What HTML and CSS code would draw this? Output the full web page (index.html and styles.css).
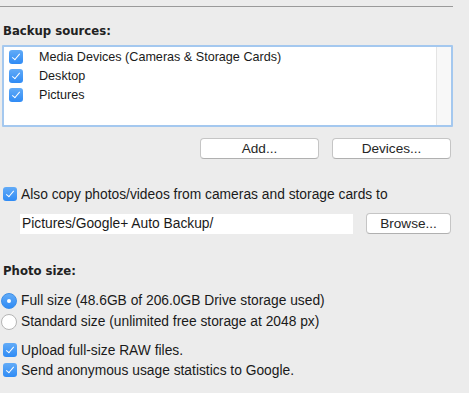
FILE: index.html
```html
<!DOCTYPE html>
<html lang="en">
<head>
    <meta charset="UTF-8">
    <title>Backup settings</title>
    <link rel="stylesheet" href="styles.css">
</head>
<body>

    <div class="panel">
        <hr class="rule">

        <h3 class="section-title">Backup sources:</h3>
        <div class="source-list">
            <ul class="sources">
                <li><span class="check on"></span><span class="label">Media Devices (Cameras &amp; Storage Cards)</span></li>
                <li><span class="check on"></span><span class="label">Desktop</span></li>
                <li><span class="check on"></span><span class="label">Pictures</span></li>
            </ul>
            <div class="scroll-track"></div>
        </div>

        <div class="button-row">
            <button class="btn wide">Add...</button>
            <button class="btn wide">Devices...</button>
        </div>

        <div class="option copy-option">
            <span class="check on"></span>
            <span>Also copy photos/videos from cameras and storage cards to</span>
        </div>

        <div class="path-row">
            <div class="path-field">Pictures/Google+ Auto Backup/</div>
            <button class="btn browse">Browse...</button>
        </div>

        <h3 class="section-title photo-title">Photo size:</h3>
        <div class="option size"><span class="radio on"></span><span>Full size (48.6GB of 206.0GB Drive storage used)</span></div>
        <div class="option size"><span class="radio"></span><span>Standard size (unlimited free storage at 2048 px)</span></div>

        <div class="extras">
            <div class="option"><span class="check on"></span><span>Upload full-size RAW files.</span></div>
            <div class="option"><span class="check on"></span><span>Send anonymous usage statistics to Google.</span></div>
        </div>
    </div>

</body>
</html>
```

FILE: styles.css
```css
body {
    margin: 0;
    background: #ececec;
    font-family: "Liberation Sans", Arial, sans-serif;
    font-size: 13.8px;
    color: #1a1a1a;
}

.panel {
    width: 453px;
    padding-top: 6px;
}

.rule {
    margin: 0;
    border: none;
    border-top: 1px solid #9a9a9a;
    height: 0;
}

.section-title {
    margin: 0;
    padding: 17px 0 0 3px;
    height: 21px;
    font-family: "DejaVu Sans", sans-serif;
    font-size: 11.7px;
    font-weight: bold;
    color: #222;
}

.source-list {
    margin-left: 2px;
    height: 78px;
    display: flex;
    background: white;
    border: 2px solid #a4c8ef;
    border-radius: 1px;
}

.sources {
    flex: 1;
    list-style: none;
    margin: 0;
    padding: 0;
    font-size: 12.6px;
}

.sources li {
    display: flex;
    align-items: center;
    height: 19px;
}

.sources .check {
    margin-left: 5px;
}

.sources .label {
    margin-left: 12px;
}

.scroll-track {
    width: 14px;
    background: #f8f8f8;
    border-left: 1px solid #e4e4e4;
}

/* checkbox + radio */
.check {
    width: 14px;
    height: 14px;
    border-radius: 3px;
    background: linear-gradient(#62abf7, #2f8bf5);
    flex-shrink: 0;
    position: relative;
    margin-right: 4px;
}

.check.on::after {
    content: "";
    position: absolute;
    left: 4.5px;
    top: 2px;
    width: 3px;
    height: 7px;
    border: solid white;
    border-width: 0 1.5px 1.5px 0;
    transform: rotate(40deg);
}

.radio {
    width: 16px;
    height: 16px;
    border-radius: 50%;
    border: 1px solid #b5b5b5;
    background: white;
    box-sizing: border-box;
    flex-shrink: 0;
    position: relative;
    margin-right: 4px;
}

.radio.on {
    background: linear-gradient(#62abf7, #2f8bf5);
    border-color: #3b8ee8;
}

.radio.on::after {
    content: "";
    position: absolute;
    left: 5px;
    top: 5px;
    width: 4px;
    height: 4px;
    border-radius: 50%;
    background: white;
}

.button-row {
    display: flex;
    justify-content: flex-end;
    gap: 13px;
    margin-top: 11px;
    padding-right: 2px;
}

.btn {
    font-family: "Liberation Sans", Arial, sans-serif;
    font-size: 13.6px;
    color: #262626;
    background: white;
    border: 1px solid #c5c5c5;
    border-bottom-color: #b0b0b0;
    border-radius: 4px;
    height: 21px;
    padding: 0;
}

.btn.wide {
    width: 119px;
}

.option {
    display: flex;
    align-items: center;
    height: 20px;
    padding-left: 3px;
}

.option.size {
    height: 21px;
    padding-left: 1px;
}

.copy-option {
    margin-top: 25px;
}

.path-row {
    display: flex;
    align-items: center;
    margin: 9px 2px 0 20px;
}

.path-field {
    width: 331px;
    height: 20px;
    line-height: 20px;
    background: white;
    padding-left: 2px;
}

.btn.browse {
    width: 85px;
    margin-left: auto;
}

.photo-title {
    padding-top: 30px;
    height: 17px;
    margin-bottom: 9px;
}

.extras {
    margin-top: 8px;
}
```
